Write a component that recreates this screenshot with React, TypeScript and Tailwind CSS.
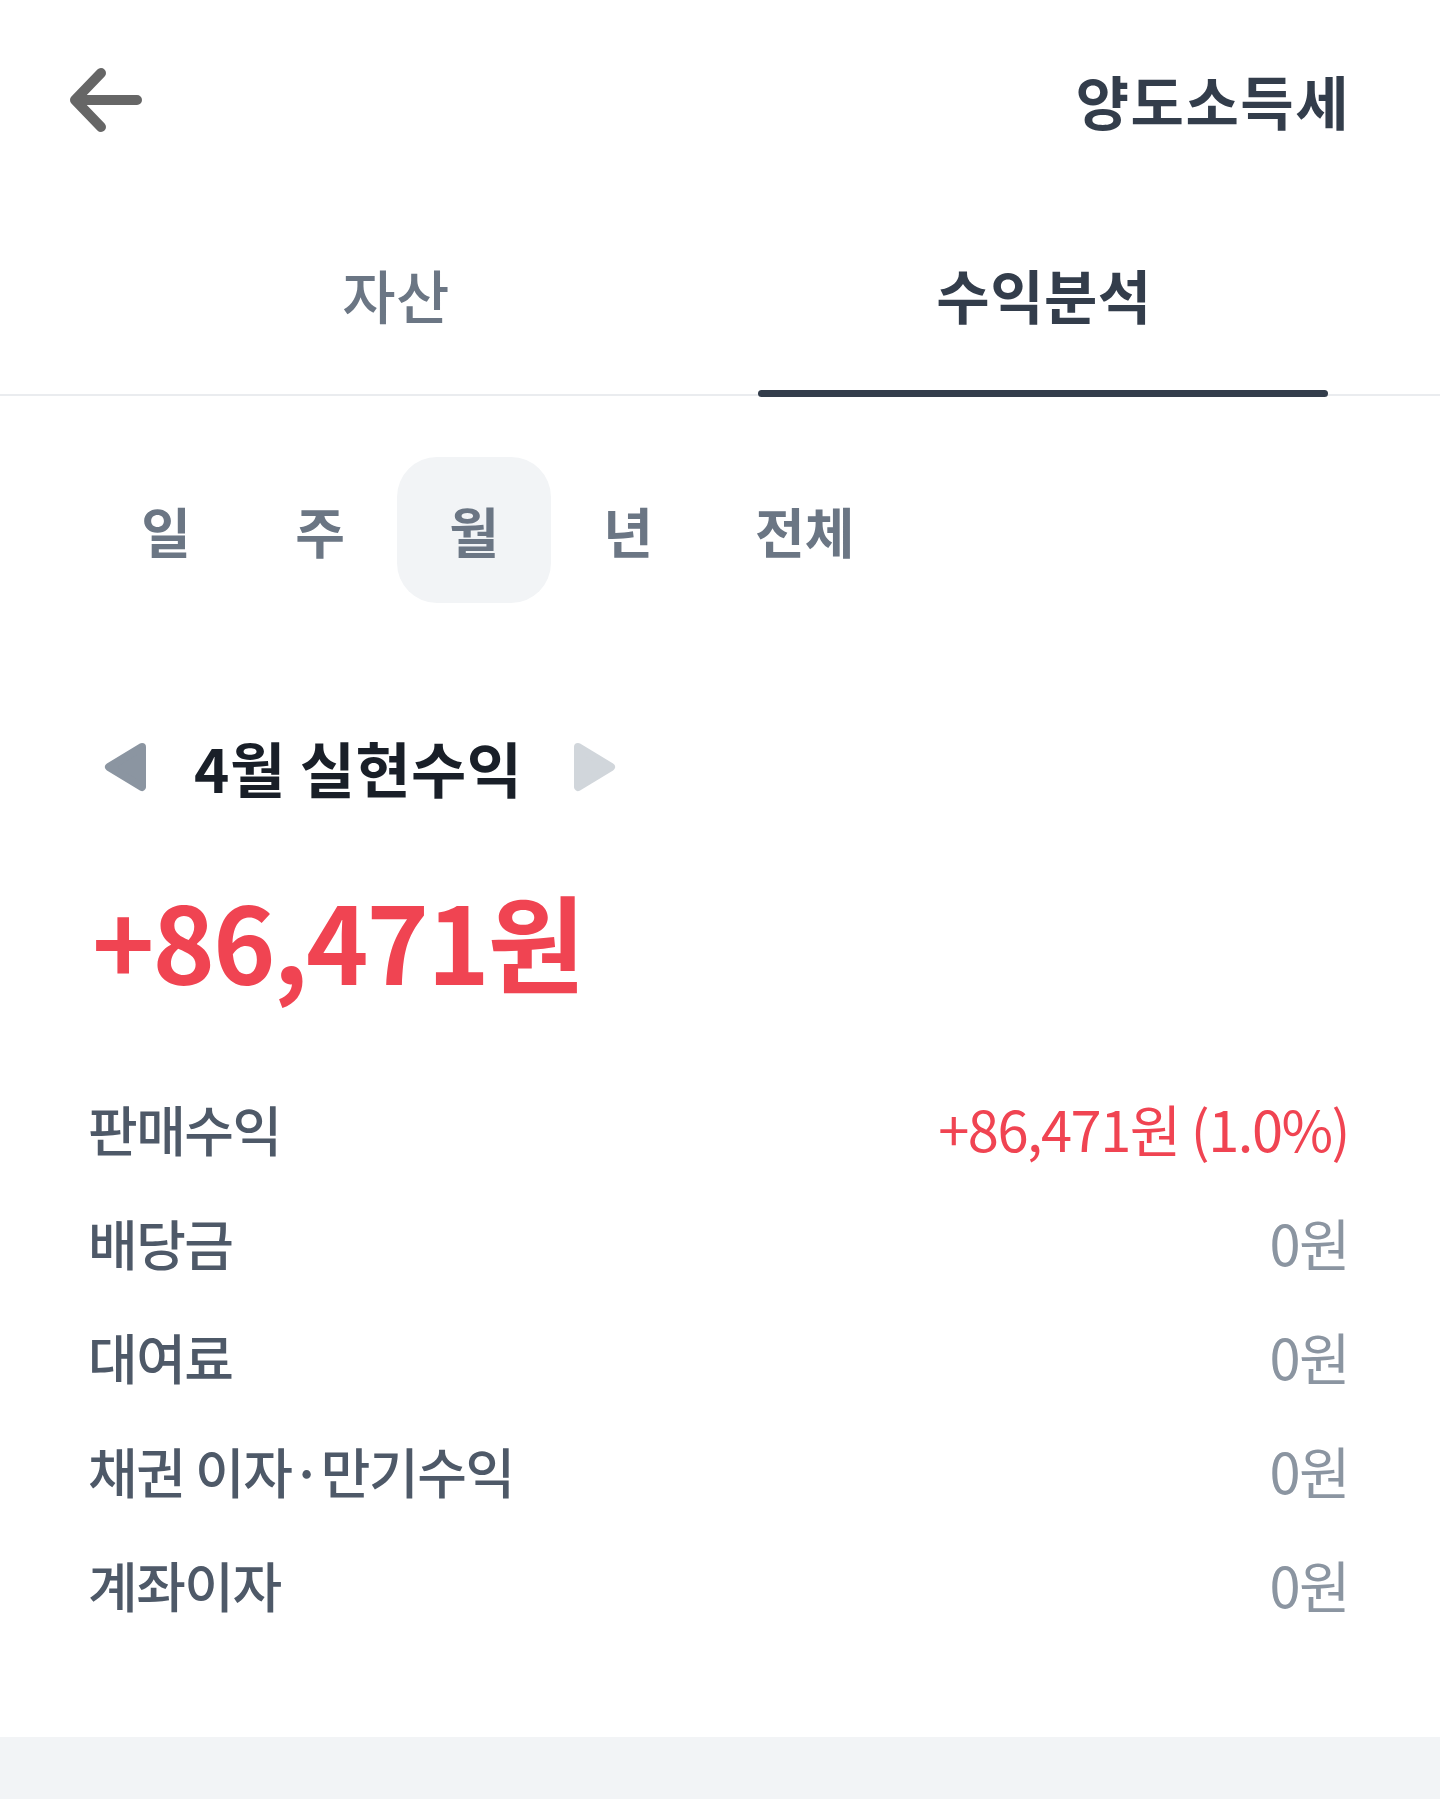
import { useState } from "react";

const periods = ["일", "주", "월", "년", "전체"];

const rows = [
  { label: "판매수익", value: "+86,471원 (1.0%)", up: true },
  { label: "배당금", value: "0원" },
  { label: "대여료", value: "0원" },
  { label: "채권 이자·만기수익", value: "0원" },
  { label: "계좌이자", value: "0원" },
];

function BackArrow() {
  return (
    <svg width="80" height="80" viewBox="0 0 80 80" fill="none">
      <path
        d="M37 13 L11 40 L37 67 M11 40 H73"
        stroke="#666666"
        strokeWidth="10"
        strokeLinecap="round"
        strokeLinejoin="round"
      />
    </svg>
  );
}

function Triangle({ dir, color }: { dir: "left" | "right"; color: string }) {
  const d = dir === "left" ? "M38 5 L5 25 L38 45 Z" : "M5 5 L38 25 L5 45 Z";
  return (
    <svg width="44" height="50" viewBox="0 0 44 50">
      <path d={d} fill={color} stroke={color} strokeWidth="8" strokeLinejoin="round" />
    </svg>
  );
}

export default function App() {
  const [tab, setTab] = useState(1);
  const [period, setPeriod] = useState(2);

  return (
    <div
      className="w-[1440px] min-h-[1799px] bg-white flex flex-col"
      style={{ fontFamily: '"Noto Sans CJK KR", "Noto Sans", sans-serif' }}
    >
      {/* header */}
      <header className="h-[200px] flex items-center justify-between pl-[64px] pr-[90px]">
        <button>
          <BackArrow />
        </button>
        <h1 className="text-[58px] font-semibold tracking-[1.5px] text-[#333d4b]">양도소득세</h1>
      </header>

      {/* tabs */}
      <div className="flex px-[72px] border-b-2 border-[#eaecef]">
        {["자산", "수익분석"].map((t, i) => (
          <button
            key={t}
            onClick={() => setTab(i)}
            className={`relative flex-1 pt-[49px] pb-[55px] text-[58px] leading-[90px] tracking-[0.5px] ${
              tab === i ? "font-bold text-[#333d4b]" : "font-medium text-[#6b7684]"
            }`}
          >
            {t}
            {tab === i && (
              <span className="absolute left-[38px] right-[40px] -bottom-[3px] h-[7px] rounded-full bg-[#333d4b]" />
            )}
          </button>
        ))}
      </div>

      {/* period filter */}
      <div className="flex pl-[89px] mt-[61px]">
        {periods.map((p, i) => (
          <button
            key={p}
            onClick={() => setPeriod(i)}
            className={`h-[146px] min-w-[154px] px-[50px] rounded-[40px] text-[54px] font-semibold text-[#6b7684] ${
              period === i ? "bg-[#f2f4f6]" : ""
            }`}
          >
            {p}
          </button>
        ))}
      </div>

      {/* month summary */}
      <div className="flex items-center mt-[122px] pl-[104px]">
        <Triangle dir="left" color="#8b95a1" />
        <span className="ml-[46px] text-[60px] leading-[84px] font-bold tracking-[0.5px] text-[#191f28]">
          4월 실현수익
        </span>
        <span className="ml-[50px]">
          <Triangle dir="right" color="#d1d6db" />
        </span>
      </div>

      <div className="px-[92px] mt-[62px] text-[106px] leading-[136px] font-bold tracking-[-2px] text-[#f04452]">
        +86,471원
      </div>

      {/* breakdown */}
      <div className="flex flex-col px-[88px] mt-[64px] pb-[96px]">
        {rows.map((r) => (
          <div key={r.label} className="flex items-center justify-between h-[114px]">
            <span className="text-[54px] font-medium tracking-[-1.5px] text-[#4e5968]">{r.label}</span>
            <span
              className={`text-[56px] tracking-[-1.5px] pr-[3px] ${r.up ? "text-[#f04452]" : "text-[#8b95a1]"}`}
            >
              {r.value}
            </span>
          </div>
        ))}
      </div>

      <div className="flex-1 bg-[#f2f4f6]" />
    </div>
  );
}
